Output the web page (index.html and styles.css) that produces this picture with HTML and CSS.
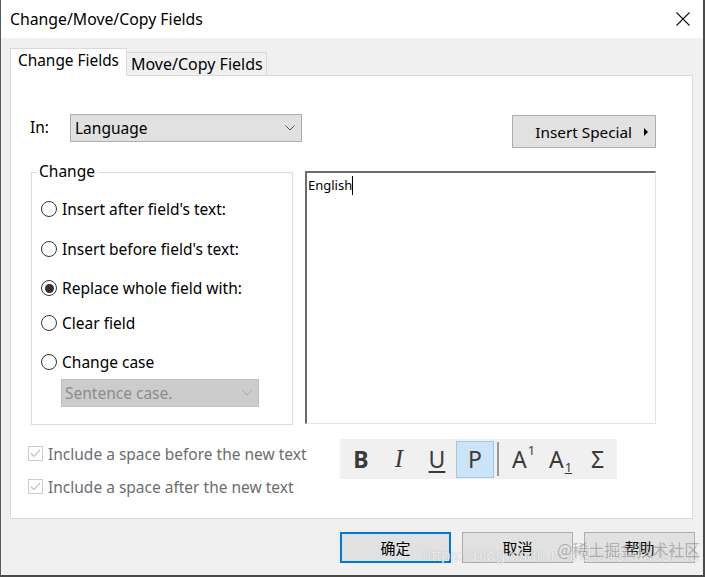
FILE: index.html
```html
<!DOCTYPE html>
<html>
<head>
<meta charset="utf-8">
<link rel="stylesheet" href="styles.css">
</head>
<body>
<div class="window">
  <div class="titlebar">
    <span class="title">Change/Move/Copy Fields</span>
    <svg class="close" width="14" height="14" viewBox="0 0 14 14"><path d="M0.5 0.5 L13.5 13.5 M13.5 0.5 L0.5 13.5" stroke="#111" stroke-width="1.1" fill="none"/></svg>
  </div>
  <div class="content">
    <div class="tabs">
      <div class="tab active">Change Fields</div>
      <div class="tab">Move/Copy Fields</div>
    </div>
    <div class="panel">
      <div class="row1">
        <span class="in-label">In:</span>
        <div class="select">
          <span>Language</span>
          <svg width="10" height="6" viewBox="0 0 10 6"><path d="M0.5 0.5 L5 5 L9.5 0.5" stroke="#555" fill="none"/></svg>
        </div>
        <div class="insert-btn">Insert Special <span class="tri"></span></div>
      </div>
      <div class="row2">
        <div class="group">
          <span class="group-title">Change</span>
          <div class="radio r1"><span class="circle"></span>Insert after field's text:</div>
          <div class="radio r2"><span class="circle"></span>Insert before field's text:</div>
          <div class="radio r3"><span class="circle checked"></span>Replace whole field with:</div>
          <div class="radio r4"><span class="circle"></span>Clear field</div>
          <div class="radio r5"><span class="circle"></span>Change case</div>
          <div class="case-select">
            <span>Sentence case.</span>
            <svg width="10" height="6" viewBox="0 0 10 6"><path d="M0.5 0.5 L5 5 L9.5 0.5" stroke="#a8a8a8" fill="none"/></svg>
          </div>
        </div>
        <div class="textbox"><span>English</span><span class="caret"></span></div>
      </div>
      <div class="row3">
        <div class="checks">
          <div class="check"><span class="box"><svg width="13" height="13" viewBox="0 0 13 13"><path d="M2 6.5 L5 9.5 L11 3" stroke="#c2c2c2" stroke-width="1.2" fill="none"/></svg></span>Include a space before the new text</div>
          <div class="check c2"><span class="box"><svg width="13" height="13" viewBox="0 0 13 13"><path d="M2 6.5 L5 9.5 L11 3" stroke="#c2c2c2" stroke-width="1.2" fill="none"/></svg></span>Include a space after the new text</div>
        </div>
        <div class="toolbar">
          <span class="tb bold">B</span>
          <span class="tb ital">I</span>
          <span class="tb under">U</span>
          <span class="tb plain on">P</span>
          <span class="sep"></span>
          <span class="tb sup">A<small>1</small></span>
          <span class="tb sub">A<small>1</small></span>
          <span class="tb sigma">Σ</span>
        </div>
      </div>
    </div>
    <div class="buttons">
      <div class="btn default">确定</div>
      <div class="btn">取消</div>
      <div class="btn">帮助</div>
    </div>
  </div>
  <span class="wm-url">https://blog.csdn.net/zhoushuaoshuu</span>
  <span class="wm-juejin">@稀土掘金技术社区</span>
</div>
</body>
</html>
```
FILE: styles.css
```css
html, body {
  margin: 0;
  padding: 0;
  background: #3a3a3a;
}
body {
  font-family: "Noto Sans", "Noto Sans CJK SC", sans-serif;
  font-size: 14px;
  color: #000;
}
.window {
  position: relative;
  width: 705px;
  height: 577px;
  box-sizing: border-box;
  border-left: 1px solid #5a5a5a;
  border-right: 2px solid #4a4a4a;
  border-bottom: 2px solid #4a4a4a;
  background: #f0f0f0;
  display: flex;
  flex-direction: column;
  overflow: hidden;
}
.titlebar {
  height: 38px;
  background: #fff;
  display: flex;
  align-items: center;
  justify-content: space-between;
  padding: 0 13px 0 9px;
}
.title {
  font-size: 15.8px;
  color: #000;
}
.content {
  padding: 10px 0 0 9px;
}
.tabs {
  display: flex;
  align-items: flex-end;
  height: 27px;
}
.tab {
  box-sizing: border-box;
  height: 23px;
  width: 140px;
  border: 1px solid #d9d9d9;
  border-left: none;
  border-bottom: none;
  background: #f0f0f0;
  font-size: 16px;
  line-height: 22px;
  padding-left: 4px;
  white-space: nowrap;
}
.tab.active {
  position: relative;
  z-index: 1;
  height: 28px;
  width: 117px;
  margin-bottom: -1px;
  background: #fff;
  border-left: 1px solid #d9d9d9;
  line-height: 24px;
  padding-left: 7px;
  font-size: 15.4px;
}
.panel {
  box-sizing: border-box;
  width: 683px;
  height: 444px;
  background: #fff;
  border: 1px solid #d9d9d9;
}
.row1 {
  display: flex;
  align-items: flex-start;
  margin-top: 38px;
  padding: 0 36px 0 19px;
}
.in-label {
  width: 40px;
  line-height: 26px;
  font-size: 15.5px;
}
.select {
  box-sizing: border-box;
  width: 232px;
  height: 28px;
  background: #e1e1e1;
  border: 1px solid #adadad;
  display: flex;
  align-items: center;
  justify-content: space-between;
  padding: 0 6px 0 4px;
  font-size: 15.5px;
}
.insert-btn {
  box-sizing: border-box;
  margin-left: auto;
  margin-top: 1px;
  width: 144px;
  height: 33px;
  background: #e1e1e1;
  border: 1px solid #adadad;
  display: flex;
  align-items: center;
  justify-content: flex-end;
  padding-right: 7px;
  font-size: 15.3px;
}
.tri {
  display: inline-block;
  width: 0;
  height: 0;
  border-top: 4px solid transparent;
  border-bottom: 4px solid transparent;
  border-left: 4px solid #000;
  margin-left: 12px;
}
.row2 {
  display: grid;
  grid-template-columns: 262px 351px;
  column-gap: 12px;
  margin-top: 23px;
  padding-left: 20px;
}
.group {
  position: relative;
  box-sizing: border-box;
  height: 253px;
  margin-top: 1px;
  border: 1px solid #dcdcdc;
  display: flex;
  flex-direction: column;
  align-items: flex-start;
}
.group-title {
  position: absolute;
  top: -12px;
  left: 5px;
  background: #fff;
  padding: 0 3px 0 2px;
  font-size: 15.5px;
  line-height: 20px;
}
.radio {
  display: flex;
  align-items: center;
  height: 20px;
  margin-left: 9px;
  font-size: 15.5px;
  white-space: nowrap;
}
.r1 { margin-top: 26px; }
.r2 { margin-top: 20px; }
.r3 { margin-top: 19px; }
.r4 { margin-top: 15px; }
.r5 { margin-top: 19px; }
.circle {
  box-sizing: border-box;
  width: 16px;
  height: 16px;
  border: 1px solid #333;
  border-radius: 50%;
  margin-right: 5px;
  display: flex;
  align-items: center;
  justify-content: center;
  flex-shrink: 0;
}
.circle.checked::after {
  content: "";
  width: 9px;
  height: 9px;
  border-radius: 50%;
  background: #333;
}
.case-select {
  box-sizing: border-box;
  width: 198px;
  height: 28px;
  margin-top: 7px;
  margin-left: 29px;
  background: #cccccc;
  border: 1px solid #bfbfbf;
  display: flex;
  align-items: center;
  justify-content: space-between;
  padding: 0 6px 0 3px;
  color: #8c8c8c;
  font-size: 15.5px;
}
.textbox {
  box-sizing: border-box;
  height: 253px;
  border-top: 2px solid #6b6b6b;
  border-left: 2px solid #6b6b6b;
  border-right: 1px solid #e3e3e3;
  border-bottom: 1px solid #e3e3e3;
  padding: 2px 0 0 1px;
  font-size: 13px;
  line-height: 20px;
  display: flex;
  align-items: flex-start;
}
.caret {
  display: inline-block;
  width: 1px;
  height: 19px;
  background: #000;
  margin-top: 1px;
}
.row3 {
  display: flex;
  margin-top: 14px;
}
.checks {
  box-sizing: border-box;
  width: 329px;
  padding-left: 17px;
  padding-top: 6px;
  color: #6d6d6d;
  font-size: 15.5px;
  white-space: nowrap;
}
.check {
  display: flex;
  align-items: center;
  height: 17px;
}
.check.c2 { margin-top: 16px; }
.box {
  box-sizing: border-box;
  width: 15px;
  height: 15px;
  border: 1px solid #cccccc;
  margin-right: 5px;
  display: flex;
  align-items: center;
  justify-content: center;
  flex-shrink: 0;
}
.toolbar {
  box-sizing: border-box;
  width: 277px;
  height: 40px;
  background: #f0f0f0;
  display: flex;
  align-items: center;
  padding-left: 2px;
  color: #3a3a3a;
}
.tb {
  box-sizing: border-box;
  width: 38px;
  height: 37px;
  display: flex;
  align-items: center;
  justify-content: center;
  font-size: 23px;
  font-family: "Noto Sans", sans-serif;
}
.tb.bold { font-weight: bold; }
.tb.ital { font-family: "Liberation Serif", serif; font-style: italic; font-size: 25px; }
.tb.under { text-decoration: underline; text-decoration-thickness: 2px; text-underline-offset: 3px; }
.tb.on {
  background: #cce4f7;
  border: 1px solid #99c9ef;
}
.sep {
  width: 2px;
  height: 34px;
  background: #9a9a9a;
  margin: 0 6px 0 3px;
}
.tb.sup, .tb.sub, .tb.sigma { width: 37px; }
.tb.sup small, .tb.sub small {
  font-size: 13px;
  position: relative;
}
.tb.sup small { top: -9px; margin-left: 1px; }
.tb.sub small { top: 8px; margin-left: 1px; text-decoration: underline; }
.buttons {
  display: flex;
  justify-content: flex-end;
  gap: 11px;
  margin-top: 13px;
  padding-right: 8px;
}
.btn {
  box-sizing: border-box;
  width: 111px;
  height: 31px;
  background: #e1e1e1;
  border: 1px solid #adadad;
  display: flex;
  align-items: center;
  justify-content: center;
  font-family: "Noto Sans CJK SC", sans-serif;
  font-size: 15px;
}
.btn.default {
  border: 2px solid #0078d7;
}
.wm-url {
  position: absolute;
  left: 421px;
  top: 546px;
  font-family: "Liberation Sans", sans-serif;
  font-size: 17px;
  color: rgba(255, 255, 255, 0.75);
  text-shadow: 0 0 1px rgba(120, 120, 120, 0.6);
  white-space: nowrap;
}
.wm-juejin {
  position: absolute;
  left: 556px;
  top: 537px;
  font-family: "Noto Sans CJK SC", sans-serif;
  font-size: 16px;
  color: rgba(110, 110, 110, 0.45);
  white-space: nowrap;
}
```
